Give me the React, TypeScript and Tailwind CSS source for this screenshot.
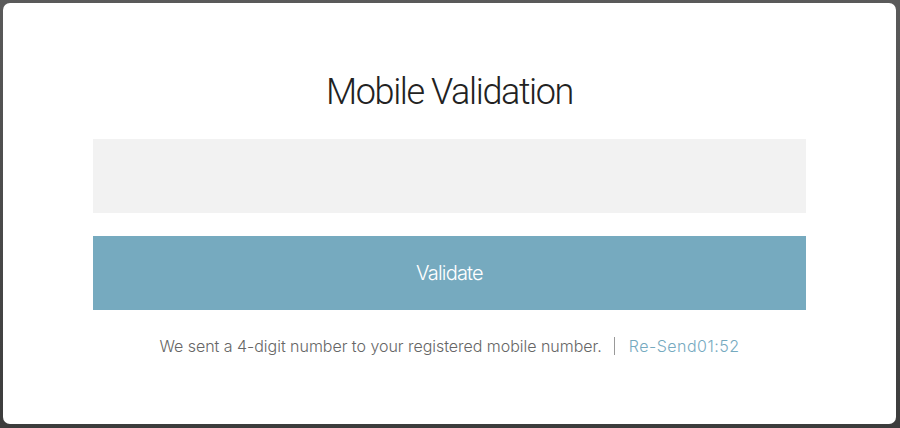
import React from "react";

export default function App() {
  return (
    <div className="w-[900px] h-[428px] bg-gradient-to-b from-[#5a5a5a] to-[#3c3c3c] p-[3px] pr-[4px] pb-[4px]" style={{ fontFamily: "Inter, 'Liberation Sans', sans-serif" }}>
      <div className="w-full h-full bg-white rounded-[7px] flex flex-col items-center pt-[67px] px-[90px]">
        <h1 className="text-[36px] leading-[44px] font-light text-[#222] tracking-[-1.4px]" style={{ fontFamily: "Roboto, sans-serif" }}>Mobile Validation</h1>
        <div className="w-full h-[74px] bg-[#f2f2f2] mt-[25px]" />
        <button className="w-full h-[74px] bg-[#76aabf] mt-[23px] text-white text-[20px] font-light tracking-[-0.8px]">Validate</button>
        <div className="mt-[25px] flex items-center text-[16px] font-light leading-[22px]">
          <span className="text-[#666] tracking-[-0.03px]">We sent a 4-digit number to your registered mobile number.</span>
          <span className="ml-[12px] mr-[14px] w-px h-[18px] bg-[#999]" />
          <span className="text-[#76aabf] tracking-[0.5px]">Re-Send01:52</span>
        </div>
      </div>
    </div>
  );
}
